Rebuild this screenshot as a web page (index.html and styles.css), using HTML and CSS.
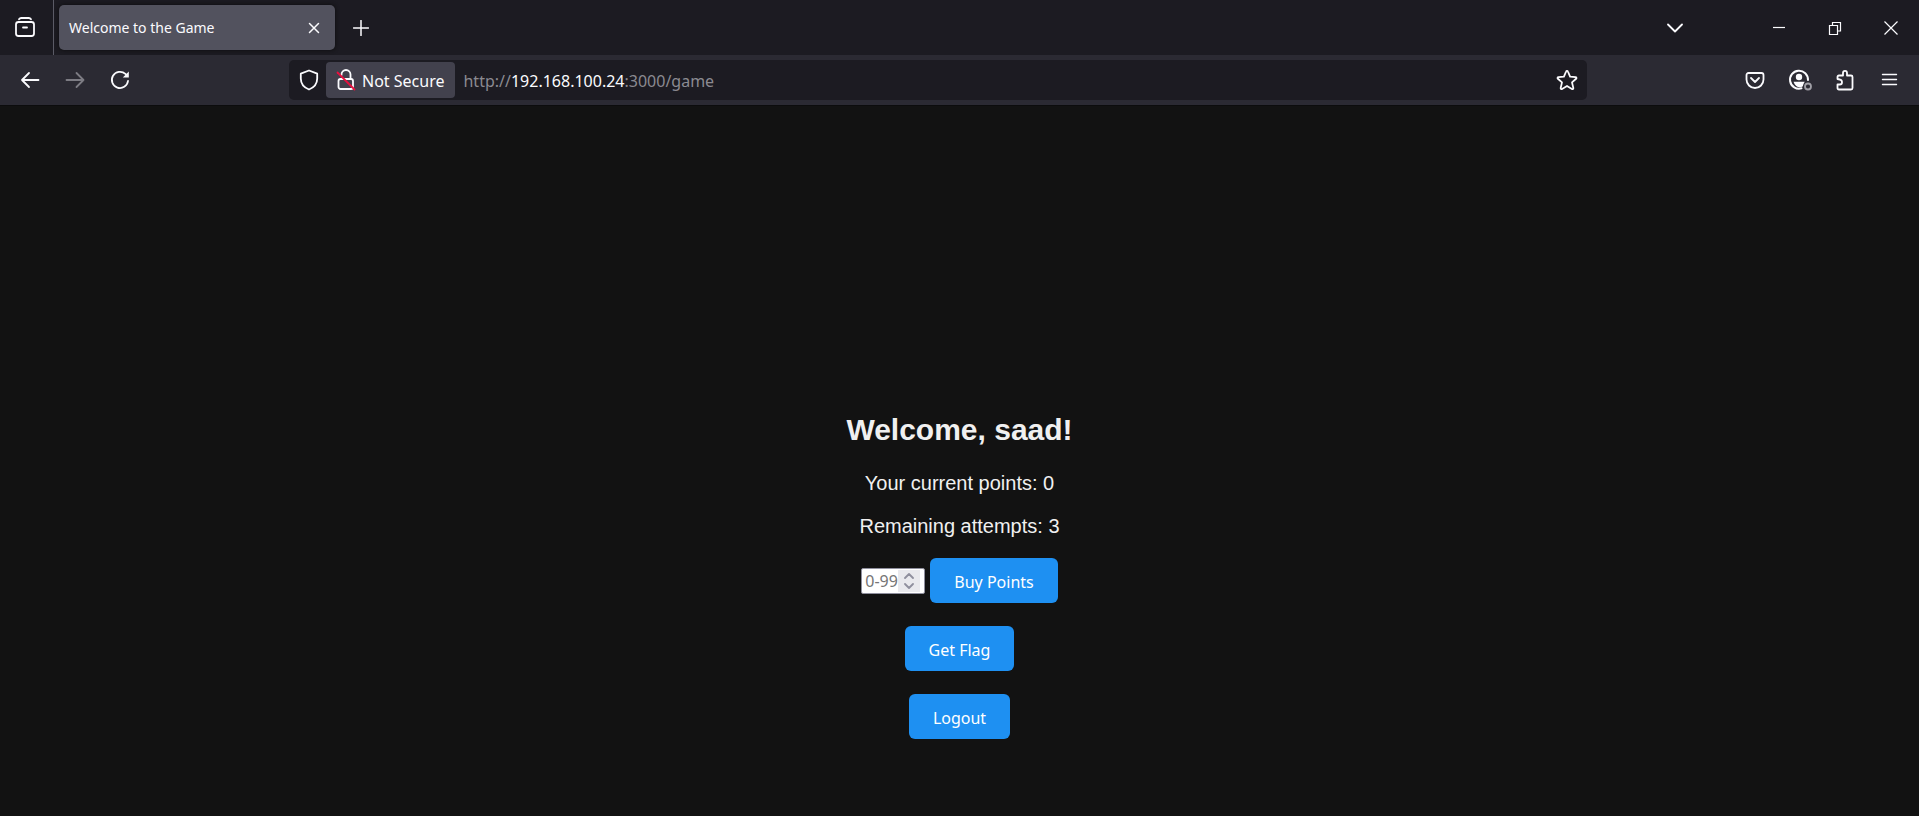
FILE: index.html
```html
<!DOCTYPE html>
<html lang="en">
<head>
<meta charset="utf-8">
<title>Welcome to the Game</title>
<link rel="stylesheet" href="styles.css">
</head>
<body>
<header class="browser">
  <div class="tabbar">
    <button class="view-button" aria-label="Firefox View">
      <svg width="22" height="22" viewBox="0 0 22 22"><path d="M5 2.200c.6-.9 1.200-1.200 2.200-1.200h7.600c1 0 1.600.3 2.200 1.200"/><rect x="2" y="5" width="18" height="14" rx="2.500"/><path d="M9 10.500h4"/></svg>
    </button>
    <div class="tab">
      <span class="tab-title">Welcome to the Game</span>
      <button class="tab-close" aria-label="Close tab">
        <svg width="12" height="12" viewBox="0 0 12 12"><path d="M1.500 1.500l9 9m0-9l-9 9"/></svg>
      </button>
    </div>
    <button class="new-tab" aria-label="New tab">
      <svg width="16" height="16" viewBox="0 0 16 16"><path d="M8 .5v15M.5 8h15"/></svg>
    </button>
    <div class="window-controls">
      <button class="tool list-tabs" aria-label="List all tabs">
        <svg width="16" height="16" viewBox="0 0 16 16"><path d="M1 4.500l7 7 7-7"/></svg>
      </button>
      <button class="window-button" aria-label="Minimize">
        <svg class="thin" width="14" height="14" viewBox="0 0 14 14"><path d="M1 6.500h12"/></svg>
      </button>
      <button class="window-button" aria-label="Restore">
        <svg class="thin" width="14" height="14" viewBox="0 0 14 14"><path d="M1.500 4.500h8v9h-8zM4.500 4.500v-3h8v8.500h-3"/></svg>
      </button>
      <button class="window-button" aria-label="Close window">
        <svg class="thin" width="14" height="14" viewBox="0 0 14 14"><path d="M.5.5l13 13m0-13l-13 13"/></svg>
      </button>
    </div>
  </div>
  <nav class="toolbar">
    <button class="tool" aria-label="Back">
      <svg width="20" height="20" viewBox="0 0 20 20"><path d="M18.500 10H2m7-7l-7 7 7 7"/></svg>
    </button>
    <button class="tool" aria-label="Forward" disabled>
      <svg width="20" height="20" viewBox="0 0 20 20"><path d="M1.500 10h17m-7-7l7 7-7 7"/></svg>
    </button>
    <button class="tool" aria-label="Reload">
      <svg width="20" height="20" viewBox="0 0 20 20"><path d="M18 11a8.100 8.100 0 1 1-2.600-7.100l1 1"/><path class="solid" d="M18.800 1.500v6h-6z"/></svg>
    </button>
    <div class="urlbar">
      <button class="shield" aria-label="Tracking protection">
        <svg width="20" height="22" viewBox="0 0 20 22"><path d="M10 1.500l8.200 3.200v4.800c0 5-3.200 9-8.200 11-5-2-8.200-6-8.200-11V4.700z"/></svg>
      </button>
      <button class="identity">
        <svg width="20" height="22" viewBox="0 0 20 22"><path d="M5.500 6V5.500a4.500 4.500 0 0 1 9 0V10"/><rect x="2.500" y="10" width="14.500" height="10" rx="2"/><path class="slash" d="M1.500 3.500l17 17"/></svg>
        <span>Not Secure</span>
      </button>
      <div class="address">http://<span class="host">192.168.100.24</span>:3000/game</div>
      <button class="bookmark" aria-label="Bookmark this page">
        <svg width="22" height="22" viewBox="0 0 22 22"><path d="M11 1.800c.4 0 .7.2.9.7l2.200 5.100 5.400.5c1 .1 1.300 1 .6 1.700l-4.100 3.600 1.300 5.500c.2 1-.6 1.500-1.400 1L11 17l-4.900 2.900c-.8.5-1.600-.1-1.400-1L6 13.400 1.900 9.800c-.7-.7-.4-1.600.6-1.700l5.400-.5 2.200-5.100c.2-.5.5-.7.9-.7z"/></svg>
      </button>
    </div>
    <button class="tool" aria-label="Save to Pocket">
      <svg width="20" height="20" viewBox="0 0 20 20"><path d="M3.500 3h13a2 2 0 0 1 2 2v4.500a8.500 8.500 0 0 1-17 0V5a2 2 0 0 1 2-2zM6 8l4 4 4-4"/></svg>
    </button>
    <button class="tool" aria-label="Account">
      <svg width="24" height="22" viewBox="0 0 24 22"><path class="heavy" d="M13.500 19.300A9 9 0 1 1 20 11"/><circle class="solid" cx="11" cy="8" r="3.200"/><path class="solid" d="M5.500 12.800h11.200l-1.200 2.200-.8 2.500c-3.200 1.700-7.500.6-9.200-4.700z"/><circle class="badge" cx="20" cy="17.500" r="3"/></svg>
    </button>
    <button class="tool" aria-label="Extensions">
      <svg width="20" height="22" viewBox="0 0 20 22"><path d="M2.500 10V8q0-1.500 1.500-1.500h4V4q0-2.200 2-2.200T12 4v2.500h4q1.500 0 1.500 1.500v11q0 1.500-1.500 1.500H4q-1.500 0-1.500-1.500v-3.500h2.200q2.300 0 2.300-2.300T4.700 10.500z"/></svg>
    </button>
    <button class="tool" aria-label="Application menu">
      <svg class="menu-icon" width="18" height="18" viewBox="0 0 18 18"><path d="M1.500 3.500h14M1.500 8.500h14M1.500 13.500h14"/></svg>
    </button>
  </nav>
</header>
<main class="page">
  <h1>Welcome, saad!</h1>
  <p>Your current points: 0</p>
  <p>Remaining attempts: 3</p>
  <form class="buy">
    <div class="amount">
      <input type="number" min="0" max="99" placeholder="0-99" aria-label="Points to buy">
      <span class="spinner" aria-hidden="true">
        <svg width="10" height="16" viewBox="0 0 10 16"><path d="M1 5l4-4 4 4M1 11l4 4 4-4"/></svg>
      </span>
    </div>
    <button class="action" type="button">Buy Points</button>
  </form>
  <button class="action" type="button">Get Flag</button>
  <button class="action" type="button">Logout</button>
</main>
</body>
</html>
```

FILE: styles.css
```css
* {
  box-sizing: border-box;
}

body {
  margin: 0;
  min-height: 100vh;
  display: flex;
  flex-direction: column;
  background: #121212;
  color: #f0f0f0;
  font-family: "Liberation Sans", Arial, sans-serif;
}

button {
  margin: 0;
  padding: 0;
  border: 0;
  background: none;
  color: inherit;
  font: inherit;
}

svg {
  display: block;
  flex: none;
  fill: none;
  stroke: currentColor;
  stroke-width: 1.8;
  stroke-linecap: round;
  stroke-linejoin: round;
}

.thin {
  stroke-width: 1.2;
  stroke-linecap: butt;
  stroke-linejoin: miter;
}

.menu-icon {
  stroke-width: 1.4;
}

.solid {
  fill: currentColor;
  stroke: none;
}

.heavy {
  stroke-width: 2;
}

.badge {
  stroke: #a09fa6;
}

.slash {
  stroke: #e8103f;
}

.browser {
  color: #fbfbfe;
  font-family: "Noto Sans", "Open Sans", sans-serif;
  border-bottom: 1px solid #0c0c0d;
}

.tabbar {
  display: flex;
  height: 55px;
  background: #1c1b22;
}

.view-button {
  width: 54px;
  padding-left: 14px;
  border-right: 1px solid #5b5b66;
}

.tab {
  display: flex;
  align-items: center;
  justify-content: space-between;
  width: 276px;
  margin: 5px 0 5px 5px;
  padding: 0 15px 0 10px;
  border-radius: 5px;
  background: #52525e;
  box-shadow: 0 0 4px #0c0c0d;
  font-size: 14px;
}

.tab-close svg {
  stroke-width: 1.5;
}

.new-tab {
  display: grid;
  place-items: center;
  width: 44px;
  margin-left: 4px;
}

.new-tab svg {
  stroke-width: 1.5;
}

.window-controls {
  display: flex;
  margin-left: auto;
}

.list-tabs {
  margin-right: 54px;
}

.window-button {
  display: grid;
  place-items: center;
  width: 56px;
}

.toolbar {
  display: flex;
  align-items: stretch;
  height: 50px;
  padding: 0 7px;
  background: #2b2a33;
}

.tool {
  display: grid;
  place-items: center;
  width: 45px;
}

.tool:disabled {
  color: #7d7c84;
}

.urlbar {
  display: flex;
  flex: 1;
  min-width: 0;
  margin: 5px 145px 5px 147px;
  border-radius: 5px;
  background: #1c1b22;
  font-size: 16px;
}

.shield {
  display: grid;
  place-items: center;
  width: 37px;
  padding-left: 3px;
}

.identity {
  display: flex;
  align-items: center;
  gap: 6px;
  margin: 2px 0;
  padding: 0 11px 0 10px;
  border-radius: 4px;
  background: #42414d;
}

.identity span {
  padding-top: 2px;
}

.address {
  flex: 1;
  align-self: center;
  padding: 2px 0 0 8px;
  color: #8b8a91;
  white-space: nowrap;
}

.host {
  color: #fbfbfe;
}

.bookmark {
  padding: 0 9px;
}

.page {
  flex: 1;
  display: flex;
  flex-direction: column;
  align-items: center;
  padding-top: 306px;
}

h1 {
  margin: 0 0 24px;
  font-size: 30px;
  line-height: 36px;
}

p {
  margin: 0 0 20px;
  font-size: 20px;
  line-height: 23px;
}

.buy {
  display: flex;
  align-items: center;
  gap: 5px;
}

.amount {
  display: grid;
  width: 64px;
  height: 26px;
  overflow: hidden;
  border: 1px solid #8f8f9d;
  border-radius: 2px;
  background: #fff;
}

.amount input {
  grid-area: 1 / 1;
  width: 36px;
  padding: 0 0 0 3px;
  border: 0;
  background: none;
  color: #000;
  font-family: "Noto Sans", sans-serif;
  font-size: 16px;
  appearance: textfield;
}

.amount input::-webkit-inner-spin-button {
  appearance: none;
  margin: 0;
}

.amount input::placeholder {
  color: #757575;
}

.spinner {
  grid-area: 1 / 1;
  display: grid;
  place-items: center;
  justify-self: end;
  width: 22px;
  margin: 1px 4px 1px 0;
  background: #e9e9ed;
  color: #8f8f9d;
}

.action {
  height: 45px;
  margin-bottom: 23px;
  padding: 2px 24px 0;
  border-radius: 6px;
  background: #1e90f2;
  color: #fff;
  font-family: "Noto Sans", sans-serif;
  font-size: 16px;
}

.buy {
  margin-bottom: 23px;
}

.buy .action {
  margin-bottom: 0;
}
```
